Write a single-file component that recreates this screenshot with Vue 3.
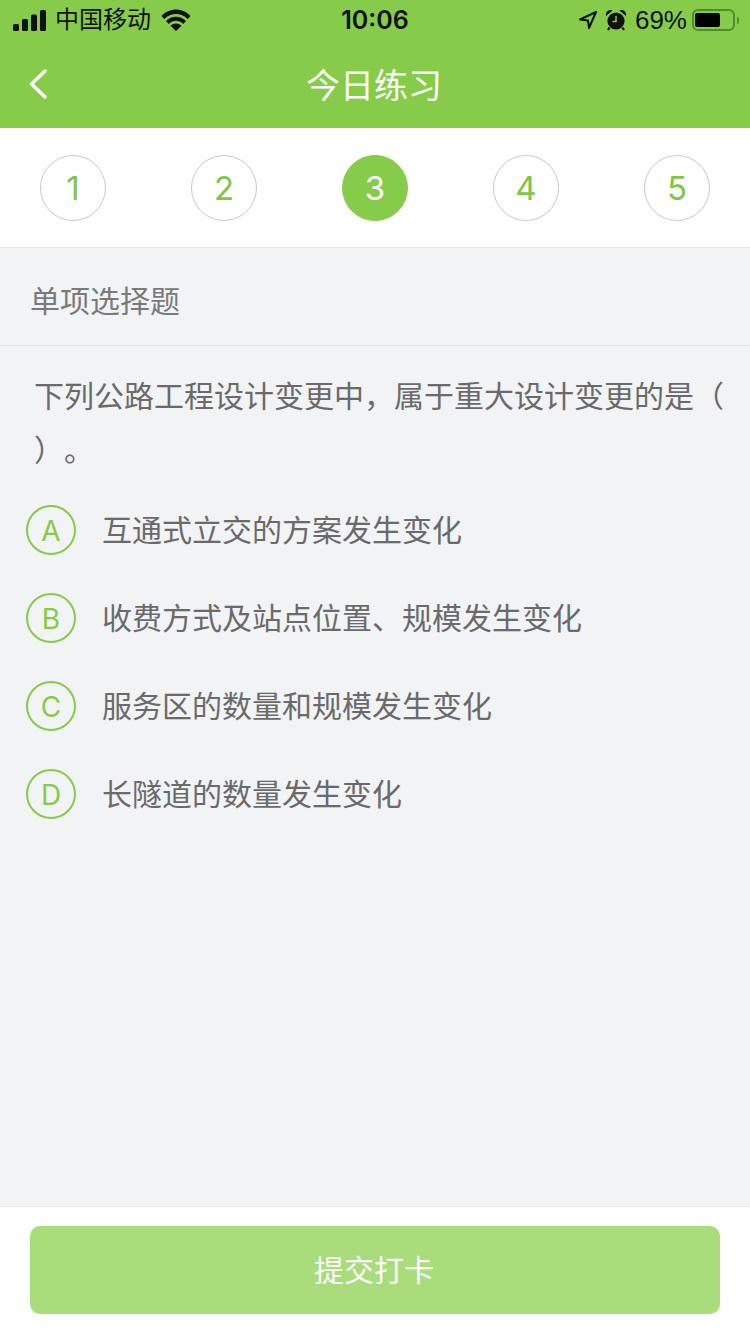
<template>
  <div class="page">
    <header class="header">
      <div class="status-bar">
        <div class="status-left">
          <svg class="signal" width="33" height="21" viewBox="0 0 33 21">
            <rect x="0" y="14" width="6" height="7" rx="1.500" />
            <rect x="9" y="9" width="6" height="12" rx="1.500" />
            <rect x="18" y="4.500" width="6" height="16.500" rx="1.500" />
            <rect x="27" y="0" width="6" height="21" rx="1.500" />
          </svg>
          <span class="carrier">中国移动</span>
          <svg class="wifi" width="30" height="22" viewBox="0 0 30 22">
            <path d="M.5 7C8 -1.800 22 -1.800 29.500 7L26.700 10C20.200 3.400 9.800 3.400 3.300 10Z" />
            <path d="M5 12C10.500 6.200 19.500 6.200 25 12L22.200 15C18 10.800 12 10.800 7.800 15Z" />
            <path d="M9.500 16.800C12.500 13.800 17.500 13.800 20.500 16.800L15 22Z" />
          </svg>
        </div>
        <div class="time">10:06</div>
        <div class="status-right">
          <svg class="location" width="20" height="20" viewBox="0 0 20 20">
            <path d="M18 2L2 9.500 10 10.500 11 18Z" fill="none" stroke="#111" stroke-width="2" stroke-linejoin="round" />
          </svg>
          <svg class="alarm" width="22" height="22" viewBox="0 0 22 22">
            <circle cx="11" cy="12" r="8.600" fill="#111" />
            <path d="M1 7C.3 3 3.500 .2 7.500 1.400ZM21 7C21.700 3 18.500 .2 14.500 1.400Z" fill="#111" />
            <path d="M4.500 18.500L3 21M17.500 18.500L19 21" stroke="#111" stroke-width="2.200" />
            <path d="M11 7V12.500H7.500" fill="none" stroke="#86cc4a" stroke-width="1.500" />
          </svg>
          <span class="percent">69%</span>
          <div class="battery">
            <div class="battery-fill"></div>
          </div>
          <div class="battery-tip"></div>
        </div>
      </div>
      <div class="nav-bar">
        <svg class="back" width="20" height="32" viewBox="0 0 20 32">
          <path d="M17 3L3.500 16 17 29" fill="none" stroke="#fff" stroke-width="3.500" stroke-linecap="round" stroke-linejoin="round" />
        </svg>
        <h1 class="nav-title">今日练习</h1>
      </div>
    </header>

    <section class="steps">
      <div
        v-for="step in steps"
        :key="step"
        class="step"
        :class="{ active: step === current }"
      >
        {{ step }}
      </div>
    </section>

    <div class="type-row">单项选择题</div>

    <main class="content">
      <p class="question">下列公路工程设计变更中，属于重大设计变更的是（ ）。</p>
      <div class="options">
        <div v-for="item in options" :key="item.key" class="option">
          <span class="option-key">{{ item.key }}</span>
          <span class="option-text">{{ item.text }}</span>
        </div>
      </div>
    </main>

    <footer class="footer">
      <button class="submit">提交打卡</button>
    </footer>
  </div>
</template>

<script setup>
const steps = [1, 2, 3, 4, 5];
const current = 3;

const options = [
  { key: "A", text: "互通式立交的方案发生变化" },
  { key: "B", text: "收费方式及站点位置、规模发生变化" },
  { key: "C", text: "服务区的数量和规模发生变化" },
  { key: "D", text: "长隧道的数量发生变化" }
];
</script>

<style>
html,
body {
  margin: 0;
  padding: 0;
}
</style>

<style scoped>
.page {
  width: 750px;
  height: 1334px;
  display: flex;
  flex-direction: column;
  background: #f2f3f5;
  font-family: "Liberation Sans", "Noto Sans CJK SC", sans-serif;
  text-spacing-trim: space-all;
  overflow: hidden;
}

.header {
  height: 128px;
  background: #86cc4a;
  flex-shrink: 0;
}

.status-bar {
  height: 40px;
  display: grid;
  grid-template-columns: 1fr auto 1fr;
  align-items: center;
  color: #111;
}

.status-left {
  display: flex;
  align-items: center;
  padding-left: 13px;
}

.signal {
  fill: #111;
  margin-right: 9px;
}

.carrier {
  font-size: 24px;
  line-height: 40px;
}

.wifi {
  fill: #111;
  margin-left: 10px;
}

.time {
  font-family: Inter, "Liberation Sans", sans-serif;
  font-size: 25px;
  font-weight: 600;
  line-height: 40px;
}

.status-right {
  display: flex;
  align-items: center;
  justify-content: flex-end;
  padding-right: 11px;
}

.location {
  margin-right: 7px;
}

.alarm {
  margin-right: 8px;
}

.percent {
  font-size: 26px;
  line-height: 40px;
  margin-right: 5px;
}

.battery {
  width: 43px;
  height: 22px;
  box-sizing: border-box;
  border: 2px solid #4f8f2a;
  border-radius: 6px;
  padding: 2px 1px;
}

.battery-fill {
  width: 25px;
  height: 14px;
  background: #000;
  border-radius: 2px;
}

.battery-tip {
  width: 2px;
  height: 7px;
  margin-left: 2px;
  background: #4f8f2a;
  border-radius: 0 2px 2px 0;
}

.nav-bar {
  height: 88px;
  position: relative;
  display: flex;
  align-items: center;
  justify-content: center;
}

.back {
  position: absolute;
  left: 28px;
  top: 28px;
}

.nav-title {
  margin: 4px 2px 0 0;
  font-size: 34px;
  font-weight: 400;
  color: #fff;
  line-height: 84px;
}

.steps {
  height: 120px;
  box-sizing: border-box;
  flex-shrink: 0;
  background: #fff;
  border-bottom: 1px solid #e6e6e6;
  padding: 27px 40px 0;
  display: flex;
  justify-content: space-between;
  align-items: flex-start;
}

.step {
  width: 66px;
  height: 66px;
  box-sizing: border-box;
  border: 1px solid #c8c8c8;
  border-radius: 50%;
  display: flex;
  align-items: center;
  justify-content: center;
  font-family: Inter, "Liberation Sans", sans-serif;
  font-size: 33px;
  font-weight: 400;
  color: #7fc64a;
}

.step.active {
  background: #86cc4a;
  border-color: #86cc4a;
  color: #fff;
}

.type-row {
  height: 98px;
  box-sizing: border-box;
  flex-shrink: 0;
  padding-left: 30px;
  border-bottom: 1px solid #e6e7e9;
  font-size: 30px;
  line-height: 108px;
  color: #7a7a7a;
}

.content {
  flex: 1;
  padding-top: 24px;
}

.question {
  margin: 0;
  padding: 0 25px 0 34px;
  font-size: 30px;
  line-height: 54px;
  color: #6a6a6a;
}

.options {
  margin-top: 8px;
  display: flex;
  flex-direction: column;
}

.option {
  height: 88px;
  display: flex;
  align-items: center;
  padding-left: 26px;
}

.option-key {
  width: 50px;
  height: 50px;
  box-sizing: border-box;
  border: 2px solid #86cc4a;
  border-radius: 50%;
  display: flex;
  align-items: center;
  justify-content: center;
  font-family: Inter, "Liberation Sans", sans-serif;
  font-size: 28px;
  font-weight: 400;
  color: #86cc4a;
  padding-top: 1px;
  flex-shrink: 0;
}

.option-text {
  margin-left: 26px;
  padding-bottom: 4px;
  font-size: 30px;
  color: #6a6a6a;
}

.footer {
  height: 128px;
  box-sizing: border-box;
  flex-shrink: 0;
  background: #fff;
  border-top: 1px solid #e9eaec;
  padding: 19px 30px 0;
}

.submit {
  width: 100%;
  height: 88px;
  border: none;
  border-radius: 10px;
  background: #a9dc7a;
  color: #fff;
  font-family: inherit;
  font-size: 30px;
  padding: 0 2px 4px 0;
}
</style>
